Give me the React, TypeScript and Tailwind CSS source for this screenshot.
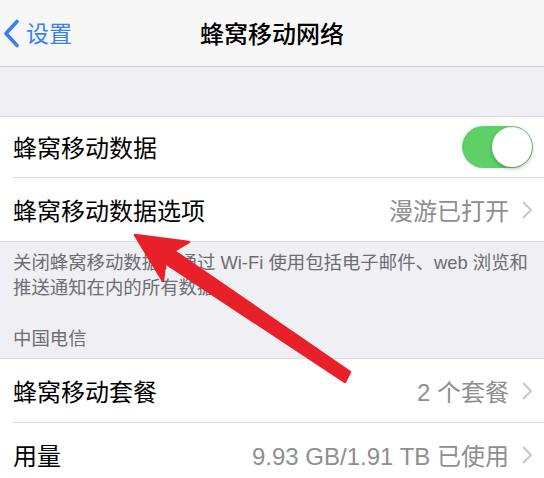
import React from "react";

const FONT = "font-['Liberation_Sans','Noto_Sans_CJK_SC',sans-serif]";

function Chevron() {
  return (
    <svg width="11" height="18" viewBox="0 0 11 18" fill="none" className="shrink-0">
      <path d="M1.5 1.5l7.5 7.5-7.5 7.5" stroke="#c7c7cc" strokeWidth={2} strokeLinecap="round" strokeLinejoin="round" />
    </svg>
  );
}

function Toggle() {
  return (
    <div className="w-[71px] h-[42px] rounded-full bg-[#5fd068] flex items-center justify-end p-[1px]">
      <div className="w-[40px] h-[40px] rounded-full bg-white shadow-[0_2px_4px_rgba(0,0,0,0.25)]" />
    </div>
  );
}

function Row({
  label,
  value,
  right,
  height,
  last,
}: {
  label: string;
  value?: string;
  right?: React.ReactNode;
  height: string;
  last?: boolean;
}) {
  return (
    <div className="pl-[13px]">
      <div
        className={`flex items-center justify-between pr-[11px] ${height} ${last ? "" : "border-b border-[#dcdce0]"}`}
      >
        <span className="text-[24px] text-black leading-none pt-[4px]">{label}</span>
        {right ?? (
          <div className="flex items-center gap-[13px]">
            <span className="text-[24px] text-[#8e8e93] leading-none pt-[4px]">{value}</span>
            <Chevron />
          </div>
        )}
      </div>
    </div>
  );
}

export default function App() {
  return (
    <div className={`relative w-[544px] h-[478px] overflow-hidden bg-[#efeff4] ${FONT}`}>
      {/* nav bar */}
      <header className="h-[67px] bg-[#f7f7f7] border-b border-[#cfcfd3] grid grid-cols-[1fr_auto_1fr] items-center">
        <div className="flex items-center gap-[6px] pl-[3px] text-[#3a7ff6]">
          <svg width="17" height="29" viewBox="0 0 17 29" fill="none">
            <path d="M14 2.5L3 14.5l11 12" stroke="#3a7ff6" strokeWidth={3.6} strokeLinecap="round" strokeLinejoin="round" />
          </svg>
          <span className="text-[23px] leading-none pt-[2px]">设置</span>
        </div>
        <h1 className="text-[24px] font-medium text-black leading-none pt-[4px]">蜂窝移动网络</h1>
        <div />
      </header>

      <div className="h-[49px]" />

      <section className="bg-white border-t border-b border-[#dcdce0]">
        <Row label="蜂窝移动数据" right={<Toggle />} height="h-[61px]" />
        <Row label="蜂窝移动数据选项" value="漫游已打开" height="h-[63px]" last />
      </section>

      <div className="px-[13px] pt-[8px] pb-[7px] text-[18.4px] leading-[25px] text-[#6d6d72]">
        <p>关闭蜂窝移动数据，通过 Wi-Fi 使用包括电子邮件、web 浏览和推送通知在内的所有数据。</p>
        <p className="mt-[26px]">中国电信</p>
      </div>

      <section className="bg-white border-t border-[#dcdce0]">
        <Row label="蜂窝移动套餐" value="2 个套餐" height="h-[64px]" />
        <Row label="用量" value="9.93 GB/1.91 TB 已使用" height="h-[64px]" last />
      </section>

      {/* red annotation arrow drawn over the screenshot */}
      <svg className="absolute inset-0 pointer-events-none" width="544" height="478" viewBox="0 0 544 478">
        <polygon
          points="135,235 189,242 174,251 350,372 345,382 165,263 163,281"
          fill="#e8202a"
          stroke="#e8202a"
          strokeWidth={2.5}
          strokeLinejoin="round"
        />
      </svg>
    </div>
  );
}
